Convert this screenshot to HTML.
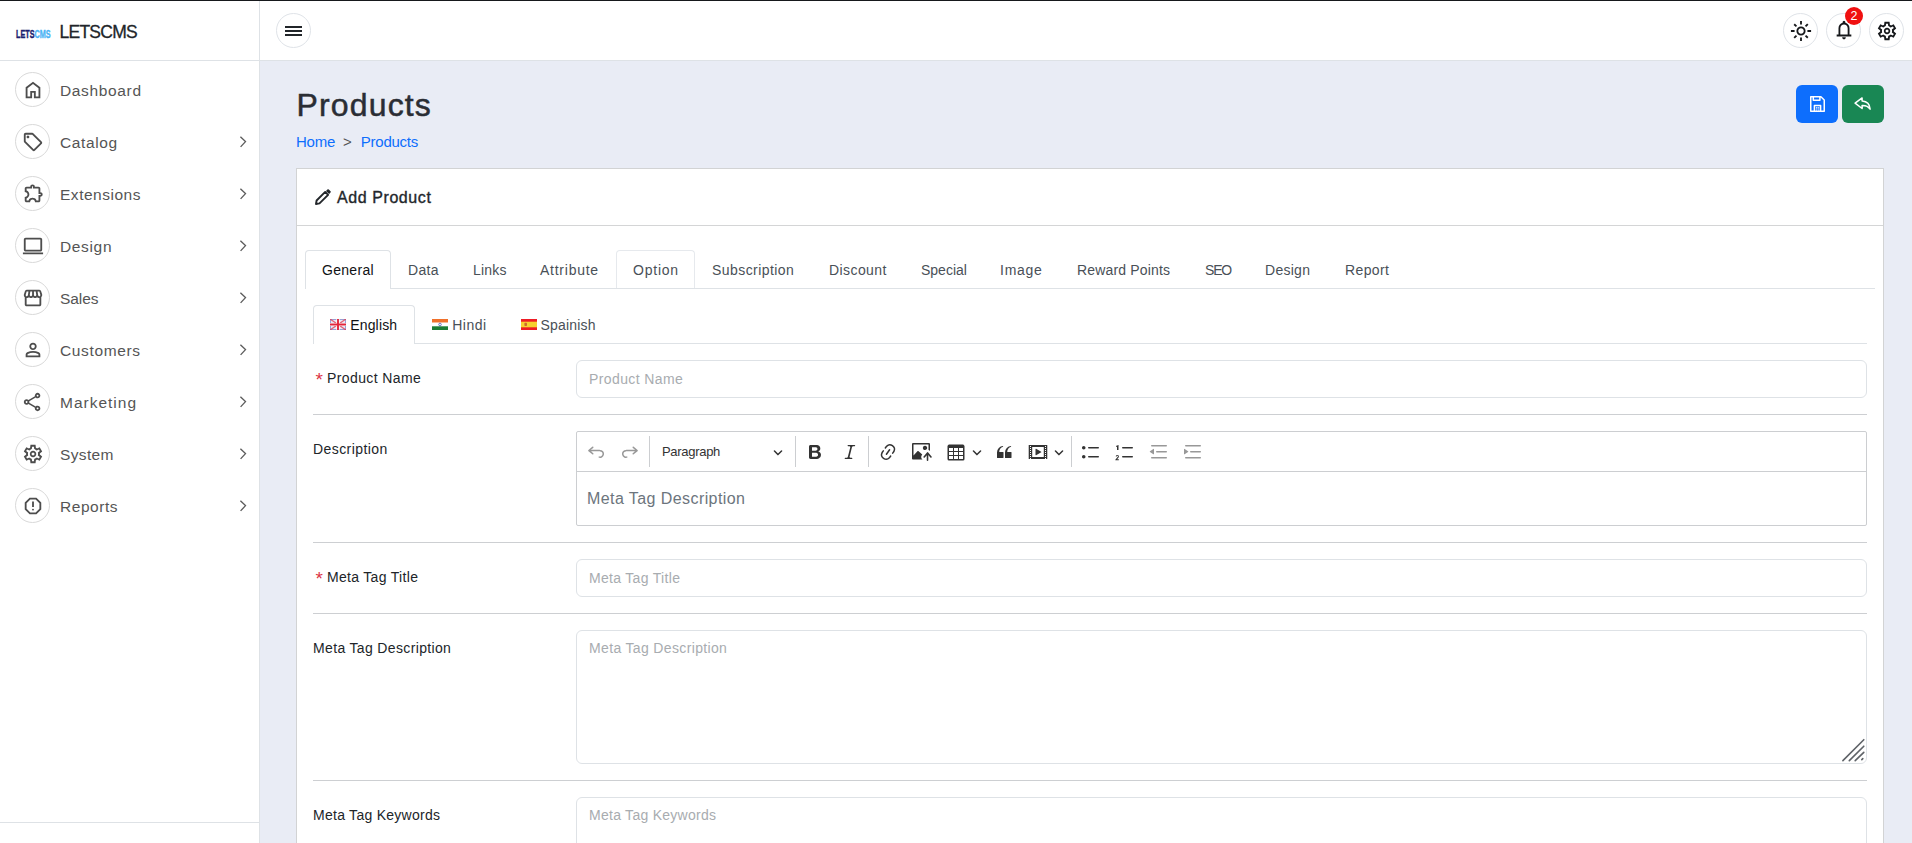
<!DOCTYPE html>
<html lang="en">
<head>
<meta charset="utf-8">
<title>Products</title>
<style>
*{box-sizing:border-box;margin:0;padding:0}
html,body{width:1912px;height:843px;overflow:hidden}
body{position:relative;background:#e9ecf5;font-family:"Liberation Sans",sans-serif;font-size:14px;color:#212529;-webkit-font-smoothing:antialiased}
.abs{position:absolute}
svg{display:block}
#topline{position:absolute;left:0;top:0;width:1912px;height:1px;background:#16181b;z-index:20}
/* sidebar */
#sidebar{position:absolute;left:0;top:0;width:260px;height:823px;background:#fff;border-right:1px solid #dee2e6;border-bottom:1px solid #dee2e6}
#sidebar-rest{position:absolute;left:0;top:823px;width:260px;height:20px;background:#fff;border-right:1px solid #dee2e6}
#brand{position:absolute;left:0;top:1px;width:259px;height:60px;border-bottom:1px solid #dee2e6}
#logo{position:absolute;left:16px;top:26.5px;font-weight:bold;font-size:10.5px;line-height:12px;white-space:nowrap;transform:scaleX(.69);transform-origin:0 50%;letter-spacing:0;-webkit-text-stroke:.4px}
#logo .a{color:#1b1f6e}
#logo .b{color:#4db4f5}
#brandname{position:absolute;left:59.5px;top:20px;font-size:17.5px;line-height:22px;color:#212529;letter-spacing:-.75px;white-space:nowrap;-webkit-text-stroke:.3px #212529}
.mi{position:absolute;left:0;width:259px;height:52px}
.mi .circ{position:absolute;left:15px;top:8px;width:35px;height:35px;border-radius:50%;border:1px solid #d9d9d9;background:#fff}
.mi .circ svg{position:absolute;left:5.5px;top:5.5px;width:22px;height:22px;fill:#4d4d4d}
.mi .lbl{position:absolute;left:60px;top:17px;font-size:15.5px;line-height:20px;color:#555;white-space:nowrap}
.mi .chev{position:absolute;left:238px;top:19px;width:10px;height:14px}
.mi .chev path{fill:none;stroke:#5c5c5c;stroke-width:1.35;stroke-linecap:butt;stroke-linejoin:miter}
/* topbar */
#topbar{position:absolute;left:260px;top:0;width:1652px;height:61px;background:#fff;border-bottom:1px solid #dee2e6}
.tcirc{position:absolute;top:13px;width:35px;height:35px;border-radius:50%;border:1px solid #dfe3e8;background:#fff}
.tcirc svg path,.mi .circ svg path{fill-rule:evenodd}
.tcirc svg{position:absolute;left:5.5px;top:6px;width:22px;height:22px;fill:#16181b}
#badge{position:absolute;left:1845px;top:7px;width:18px;height:18px;border-radius:50%;background:#f01010;color:#fff;font-size:12.5px;line-height:18px;text-align:center;z-index:5}
/* heading */
#ptitle{position:absolute;left:296.5px;top:86px;font-size:32px;line-height:38px;font-weight:400;color:#2a2d34;letter-spacing:1.15px;white-space:nowrap;-webkit-text-stroke:.5px #2a2d34}
#crumb{position:absolute;left:296px;top:132px;font-size:15px;line-height:20px;white-space:nowrap;color:#555}
#crumb a{color:#0d6efd;text-decoration:none}
.btn{position:absolute;top:85px;width:42px;height:38px;border-radius:6px}
#bsave{left:1796px;background:#0d6efd}
#bback{left:1842px;background:#198754}
/* card */
#card{position:absolute;left:296px;top:168px;width:1588px;height:700px;background:#fff;border:1px solid #d2d3d4;border-bottom:0}
#cardhead{position:absolute;left:0;top:0;width:1586px;height:57px;border-bottom:1px solid #d4d5d6}
#cardtitle{position:absolute;left:40px;top:18.5px;font-size:16px;line-height:20px;font-weight:normal;color:#23272b;letter-spacing:.58px;white-space:nowrap;-webkit-text-stroke:.35px #23272b}

/* tabs */
.navline{position:absolute;height:1px;background:#dee2e6}
.tab{position:absolute;height:38px;border:1px solid transparent;border-bottom:0;border-radius:4px 4px 0 0;text-align:left;padding-left:16px;font-size:14px;line-height:21px;padding-top:9px;color:#495057;white-space:nowrap}
.tab.act{background:#fff;border-color:#dee2e6;color:#101214;height:39px}
.tab.hov{border-color:#e6e9ed}
.ltab{position:absolute;height:38px;border:1px solid transparent;border-bottom:0;border-radius:4px 4px 0 0;font-size:14px;line-height:21px;padding:9px 0 0 36.2px;color:#495057;white-space:nowrap}
.ltab.act{background:#fff;border-color:#dee2e6;color:#101214;height:39px}
.flag{position:absolute;left:16px;top:13px;width:16px;height:11px}
/* form */
.sep{position:absolute;left:16px;width:1554px;height:1px;background:#cdcfd2}
.flabel{position:absolute;font-size:14px;line-height:21px;color:#212529;white-space:nowrap}
.flabel .req{color:#dc3545;position:absolute;left:-11.5px;top:1px;font-size:19px;letter-spacing:0}
.finput{position:absolute;left:279px;width:1291px;border:1px solid #dee2e6;border-radius:6px;background:#fff;font-family:"Liberation Sans",sans-serif;font-size:14px;line-height:21px;color:#212529;padding:8px 12px;outline:none;resize:none;overflow:hidden;display:block}
.finput::placeholder{color:#a8acb0;opacity:1}
/* editor */
#editor{position:absolute;left:279px;top:262px;width:1291px;height:95px;border:1px solid #ccced1;border-radius:2px;background:#fff}
#etool{position:absolute;left:0;top:0;width:1289px;height:40px;border-bottom:1px solid #ccced1}
#etool svg{position:absolute;fill:#333}
#etool svg.dis{fill:#333;opacity:.5}
#etool .tsep{position:absolute;top:4px;width:1px;height:31px;background:#ccced1}
#etool .para{position:absolute;left:85px;top:10.5px;font-size:13px;line-height:17px;color:#333;white-space:nowrap;letter-spacing:-.3px}
#econtent{position:absolute;left:10px;top:55px;font-size:16px;line-height:24px;color:#6c757d;white-space:nowrap;letter-spacing:.42px}
</style>
</head>
<body>
<div id="topline"></div>

<div id="sidebar">
  <div id="brand">
    <div id="logo"><span class="a">LETS</span><span class="b">CMS</span></div>
    <div id="brandname">LETSCMS</div>
  </div>
  <div class="mi" style="top:64px"><div class="circ"><svg viewBox="0 -960 960 960"><path d="M240-200h120v-240h240v240h120v-360L480-740 240-560v360Zm-80 80v-480l320-240 320 240v480H520v-240h-80v240H160Z"/></svg></div><div class="lbl" style="letter-spacing:0.65px">Dashboard</div></div>
  <div class="mi" style="top:116px"><div class="circ"><svg viewBox="0 -960 960 960"><path d="M856-390 570-104q-12 12-27 18t-30 6q-15 0-30-6t-27-18L103-457q-11-11-17-25.500T80-513v-287q0-33 23.500-56.500T160-880h287q16 0 31 6.500t26 17.500l352 353q12 12 17.500 27t5.500 30q0 15-5.500 29.500T856-390ZM513-160l286-286-353-354H160v286l353 354ZM260-640q25 0 42.500-17.500T320-700q0-25-17.500-42.500T260-760q-25 0-42.500 17.500T200-700q0 25 17.500 42.500T260-640Z"/></svg></div><div class="lbl" style="letter-spacing:0.6px">Catalog</div><svg class="chev" viewBox="0 0 10 14"><path d="M2.400 1.700 7.500 6.600 2.600 11.900"/></svg></div>
  <div class="mi" style="top:168px"><div class="circ"><svg viewBox="0 -960 960 960"><path d="M352-120H200q-33 0-56.500-23.500T120-200v-152q48 0 84-30.500t36-77.500q0-47-36-77.500T120-568v-152q0-33 23.500-56.500T200-800h160q0-42 29-71t71-29q42 0 71 29t29 71h160q33 0 56.500 23.500T800-720v160q42 0 71 29t29 71q0 42-29 71t-71 29v160q0 33-23.500 56.500T720-120H568q0-50-31.500-85T460-240q-45 0-76.500 35T352-120Zm-152-80h85q24-66 77-93t98-27q45 0 98 27t77 93h85v-240h80q8 0 14-6t6-14q0-8-6-14t-14-6h-80v-240H480v-80q0-8-6-14t-14-6q-8 0-14 6t-6 14v80H200v88q54 20 87 67t33 105q0 57-33 104t-87 68v88Z"/></svg></div><div class="lbl" style="letter-spacing:0.52px">Extensions</div><svg class="chev" viewBox="0 0 10 14"><path d="M2.400 1.700 7.500 6.600 2.600 11.900"/></svg></div>
  <div class="mi" style="top:220px"><div class="circ"><svg viewBox="0 -960 960 960"><path d="M40-120v-80h880v80H40Zm120-120q-33 0-56.500-23.500T80-320v-440q0-33 23.500-56.500T160-840h640q33 0 56.500 23.500T880-760v440q0 33-23.500 56.500T800-240H160Zm0-80h640v-440H160v440Z"/></svg></div><div class="lbl" style="letter-spacing:0.65px">Design</div><svg class="chev" viewBox="0 0 10 14"><path d="M2.400 1.700 7.500 6.600 2.600 11.900"/></svg></div>
  <div class="mi" style="top:272px"><div class="circ"><svg viewBox="0 -960 960 960"><path d="M841-518v318q0 33-23.500 56.500T761-120H201q-33 0-56.500-23.500T121-200v-318q-23-21-35.500-54t-.5-72l42-136q8-26 28.500-43t47.500-17h556q27 0 47 16.500t29 43.500l42 136q12 39-.5 71T841-518Zm-272-42q27 0 41-18.500t11-41.500l-22-140h-78v148q0 21 14 36.500t34 15.500Zm-180 0q23 0 37.500-15.500T441-612v-148h-78l-22 140q-4 24 10.500 42t37.500 18Zm-178 0q18 0 31.500-13t16.500-33l22-154h-78l-40 134q-6 20 6.500 43t41.500 23Zm540 0q29 0 42-23t6-43l-42-134h-76l22 154q3 20 16.500 33t31.500 13ZM201-200h560v-282q-5 2-6.500 2H751q-27 0-47.500-9T663-518q-18 18-41 28t-49 10q-27 0-50.500-10T481-518q-17 18-39.500 28T393-480q-29 0-52.500-10T299-518q-21 21-41.500 29.500T211-480h-4.500q-2.500 0-5.500-2v282Z"/></svg></div><div class="lbl" style="letter-spacing:-0.05px">Sales</div><svg class="chev" viewBox="0 0 10 14"><path d="M2.400 1.700 7.500 6.600 2.600 11.900"/></svg></div>
  <div class="mi" style="top:324px"><div class="circ"><svg viewBox="0 -960 960 960"><path d="M480-480q-66 0-113-47t-47-113q0-66 47-113t113-47q66 0 113 47t47 113q0 66-47 113t-113 47ZM160-160v-112q0-34 17.500-62.500T224-378q62-31 126-46.500T480-440q66 0 130 15.500T736-378q29 15 46.500 43.500T800-272v112H160Zm80-80h480v-32q0-11-5.500-20T700-306q-54-27-109-40.500T480-360q-56 0-111 13.500T260-306q-9 5-14.500 14t-5.500 20v32Zm240-320q33 0 56.500-23.500T560-640q0-33-23.500-56.500T480-720q-33 0-56.500 23.500T400-640q0 33 23.500 56.500T480-560Z"/></svg></div><div class="lbl" style="letter-spacing:0.63px">Customers</div><svg class="chev" viewBox="0 0 10 14"><path d="M2.400 1.700 7.500 6.600 2.600 11.900"/></svg></div>
  <div class="mi" style="top:376px"><div class="circ"><svg viewBox="0 -960 960 960"><path d="M680-80q-50 0-85-35t-35-85q0-6 3-28L282-392q-16 15-37 23.500t-45 8.500q-50 0-85-35t-35-85q0-50 35-85t85-35q24 0 45 8.500t37 23.500l281-164q-2-7-2.500-13.500T560-760q0-50 35-85t85-35q50 0 85 35t35 85q0 50-35 85t-85 35q-24 0-45-8.500T598-672L317-508q2 7 2.500 13.500t.5 14.500q0 8-.5 14.500T317-452l281 164q16-15 37-23.500t45-8.500q50 0 85 35t35 85q0 50-35 85t-85 35Zm0-80q17 0 28.500-11.500T720-200q0-17-11.500-28.500T680-240q-17 0-28.500 11.500T640-200q0 17 11.500 28.500T680-160ZM200-440q17 0 28.500-11.500T240-480q0-17-11.500-28.500T200-520q-17 0-28.500 11.500T160-480q0 17 11.500 28.500T200-440Zm480-280q17 0 28.500-11.500T720-760q0-17-11.500-28.500T680-800q-17 0-28.500 11.500T640-760q0 17 11.500 28.500T680-720Z"/></svg></div><div class="lbl" style="letter-spacing:1.0px">Marketing</div><svg class="chev" viewBox="0 0 10 14"><path d="M2.400 1.700 7.500 6.600 2.600 11.900"/></svg></div>
  <div class="mi" style="top:428px"><div class="circ"><svg viewBox="0 -960 960 960"><path d="m370-80-16-128q-13-5-24.500-12T307-235l-119 50L78-375l103-78q-1-7-1-13.500v-27q0-6.500 1-13.500L78-585l110-190 119 50q11-8 23-15t24-12l16-128h220l16 128q13 5 24.500 12t22.500 15l119-50 110 190-103 78q1 7 1 13.500v27q0 6.500-2 13.500l103 78-110 190-118-50q-11 8-23 15t-24 12L590-80H370Zm70-80h79l14-106q31-8 57.500-23.500T639-327l99 41 39-68-86-65q5-14 7-29.500t2-31.500q0-16-2-31.500t-7-29.500l86-65-39-68-99 42q-22-23-48.500-38.500T533-694l-13-106h-79l-14 106q-31 8-57.500 23.500T321-633l-99-41-39 68 86 64q-5 15-7 30t-2 32q0 16 2 31t7 30l-86 65 39 68 99-42q22 23 48.500 38.500T427-266l13 106Zm42-180q58 0 99-41t41-99q0-58-41-99t-99-41q-59 0-99.500 41T342-480q0 58 40.500 99t99.500 41ZM482-415q-27 0-46-19t-19-46q0-27 19-46t46-19q27 0 46 19t19 46q0 27-19 46t-46 19Z"/></svg></div><div class="lbl" style="letter-spacing:0.36px">System</div><svg class="chev" viewBox="0 0 10 14"><path d="M2.400 1.700 7.500 6.600 2.600 11.900"/></svg></div>
  <div class="mi" style="top:480px"><div class="circ"><svg viewBox="0 -960 960 960"><path d="M480-280q17 0 28.500-11.500T520-320q0-17-11.500-28.500T480-360q-17 0-28.500 11.500T440-320q0 17 11.500 28.500T480-280Zm-40-160h80v-240h-80v240ZM330-120 120-330v-300l210-210h300l210 210v300L630-120H330Zm34-80h232l164-164v-232L596-760H364L200-596v232l164 164Z"/></svg></div><div class="lbl" style="letter-spacing:0.54px">Reports</div><svg class="chev" viewBox="0 0 10 14"><path d="M2.400 1.700 7.500 6.600 2.600 11.900"/></svg></div>
</div>
<div id="sidebar-rest"></div>

<div id="topbar">
  <div class="tcirc" style="left:16px"><svg style="left:8px;top:12px;width:17px;height:10px" viewBox="0 0 17 10"><path d="M0 0h17v2H0zM0 4.100h17v2H0zM0 8.100h17v1.900H0z" fill="#212529"/></svg></div>
  <div class="tcirc" style="left:1523px"><svg viewBox="0 -960 960 960"><path d="M480-360q50 0 85-35t35-85q0-50-35-85t-85-35q-50 0-85 35t-35 85q0 50 35 85t85 35Zm0 80q-83 0-141.500-58.500T280-480q0-83 58.500-141.500T480-680q83 0 141.500 58.500T680-480q0 83-58.500 141.500T480-280ZM200-440H40v-80h160v80Zm720 0H760v-80h160v80ZM440-760v-160h80v160h-80Zm0 720v-160h80v160h-80ZM256-650l-101-97 57-59 96 100-52 56Zm492 496-97-101 53-55 101 97-57 59Zm-98-550 97-101 59 57-100 96-56-52ZM154-212l101-97 55 53-97 101-59-57Z"/></svg></div>
  <div class="tcirc" style="left:1566px"><svg style="top:5px" viewBox="0 -960 960 960"><path d="M160-200v-80h80v-280q0-83 50-147.500T420-792v-28q0-25 17.500-42.500T480-880q25 0 42.500 17.500T540-820v28q80 20 130 84.500T720-560v280h80v80H160Zm320 120q-33 0-56.500-23.500T400-160h160q0 33-23.500 56.500T480-80ZM320-280h320v-280q0-66-47-113t-113-47q-66 0-113 47t-47 113v280Z"/></svg></div>
  <div class="tcirc" style="left:1609px"><svg viewBox="0 -960 960 960"><path d="m370-80-16-128q-13-5-24.500-12T307-235l-119 50L78-375l103-78q-1-7-1-13.500v-27q0-6.500 1-13.500L78-585l110-190 119 50q11-8 23-15t24-12l16-128h220l16 128q13 5 24.500 12t22.500 15l119-50 110 190-103 78q1 7 1 13.500v27q0 6.500-2 13.500l103 78-110 190-118-50q-11 8-23 15t-24 12L590-80H370Zm70-80h79l14-106q31-8 57.500-23.500T639-327l99 41 39-68-86-65q5-14 7-29.500t2-31.500q0-16-2-31.500t-7-29.500l86-65-39-68-99 42q-22-23-48.500-38.500T533-694l-13-106h-79l-14 106q-31 8-57.500 23.500T321-633l-99-41-39 68 86 64q-5 15-7 30t-2 32q0 16 2 31t7 30l-86 65 39 68 99-42q22 23 48.500 38.500T427-266l13 106Zm42-180q58 0 99-41t41-99q0-58-41-99t-99-41q-59 0-99.500 41T342-480q0 58 40.500 99t99.500 41ZM482-415q-27 0-46-19t-19-46q0-27 19-46t46-19q27 0 46 19t19 46q0 27-19 46t-46 19Z"/></svg></div>
</div>
<div id="badge">2</div>

<h1 id="ptitle">Products</h1>
<div id="crumb"><a style="letter-spacing:-.25px">Home</a><span style="margin:0 9px 0 8px">&gt;</span><a style="letter-spacing:-.24px">Products</a></div>
<div class="btn" id="bsave"><svg class="abs" style="left:14px;top:11px;width:15px;height:16px" viewBox="0 0 15 16"><path d="M.75.75h10.2l3.3 3.3v11.2H.75z M3.3.9v3.3h6.6V.9 M4.4 15.1V9.6h6.2v5.5" fill="none" stroke="#fff" stroke-width="1.5" stroke-linejoin="round"/><path d="M5.900 11h3.400v3.600H5.900z" fill="#fff" opacity=".92"/><path d="M7.600 11v3.600M5.900 12.200h3.400M5.900 13.400h3.400" fill="none" stroke="#0d6efd" stroke-width=".55"/></svg></div>
<div class="btn" id="bback"><svg class="abs" style="left:12px;top:12px;width:18px;height:14px" viewBox="0 0 18 14"><path d="M8.1.9 1.1 6.2l7 5.3V8.4c3.6-.2 6.1.8 8 3.7C15.800 7.600 13.200 4.500 8.100 4.100z" fill="none" stroke="#fff" stroke-width="1.5" stroke-linejoin="round"/></svg></div>

<div id="card">
  <div id="cardhead">
    <svg class="abs" style="left:18px;top:20px;width:16px;height:16px" viewBox="0 0 16 16"><path d="M1 15 1.600 11.500 10.200 2.900 13.100 5.800 4.500 14.400Z" fill="none" stroke="#23272b" stroke-width="1.900" stroke-linejoin="round"/><path d="M11 1.900 12.400.500a1 1 0 0 1 1.400 0L15.500 2.200a1 1 0 0 1 0 1.400L14.100 5Z" fill="#23272b"/></svg>
    <div id="cardtitle">Add Product</div>
  </div>
  <div class="navline" style="left:8px;top:119px;width:1570px"></div>
  <div class="tab act" style="left:8px;top:81px;width:86px;letter-spacing:0.3px">General</div>
  <div class="tab" style="left:94px;top:81px;width:65px;letter-spacing:0.35px">Data</div>
  <div class="tab" style="left:159px;top:81px;width:67px;letter-spacing:0.2px">Links</div>
  <div class="tab" style="left:226px;top:81px;width:93px;letter-spacing:0.75px">Attribute</div>
  <div class="tab hov" style="left:319px;top:81px;width:79px;letter-spacing:0.78px">Option</div>
  <div class="tab" style="left:398px;top:81px;width:117px;letter-spacing:0.43px">Subscription</div>
  <div class="tab" style="left:515px;top:81px;width:92px;letter-spacing:0.42px">Discount</div>
  <div class="tab" style="left:607px;top:81px;width:79px;letter-spacing:0px">Special</div>
  <div class="tab" style="left:686px;top:81px;width:77px;letter-spacing:0.75px">Image</div>
  <div class="tab" style="left:763px;top:81px;width:128px;letter-spacing:0.17px">Reward Points</div>
  <div class="tab" style="left:891px;top:81px;width:60px;letter-spacing:-1.2px">SEO</div>
  <div class="tab" style="left:951px;top:81px;width:80px;letter-spacing:0.27px">Design</div>
  <div class="tab" style="left:1031px;top:81px;width:78px;letter-spacing:0.38px">Report</div>
  <div class="navline" style="left:16px;top:174px;width:1554px"></div>
  <div class="ltab act" style="left:16px;top:136px;width:102px;letter-spacing:0.17px"><svg class="flag" viewBox="0 0 16 11"><rect width="16" height="11" fill="#e8eaf6"/><rect x=".5" y=".5" width="15" height="10" fill="none" stroke="#5a63b8" stroke-width="1" opacity=".55"/><path d="M0 0l16 11M16 0L0 11" stroke="#e2344a" stroke-width="1.3" opacity=".75"/><path d="M8 0v11M0 5.500h16" stroke="#fff" stroke-width="3.200"/><path d="M8 0v11M0 5.500h16" stroke="#e2263c" stroke-width="1.900"/></svg>English</div>
  <div class="ltab" style="left:118px;top:136px;width:89px;letter-spacing:0.5px"><svg class="flag" viewBox="0 0 16 11"><rect width="16" height="3.700" fill="#f0702a"/><rect y="3.700" width="16" height="3.600" fill="#fff"/><rect y="7.300" width="16" height="3.700" fill="#1c7c34"/><circle cx="8" cy="5.500" r="1.300" fill="none" stroke="#3a46a8" stroke-width=".700"/></svg>Hindi</div>
  <div class="ltab" style="left:207px;top:136px;width:109px;letter-spacing:0.18px;padding-left:35.5px"><svg class="flag" viewBox="0 0 16 11"><rect width="16" height="11" fill="#f6d030"/><rect width="16" height="2.700" fill="#ee1c25"/><rect y="8.300" width="16" height="2.700" fill="#ee1c25"/><rect x="3.400" y="3.800" width="2.600" height="3.200" rx=".8" fill="#c4572c" opacity=".85"/></svg>Spainish</div>
  <label class="flabel" style="left:30px;top:199px;letter-spacing:0.39px"><span class="req">*</span>Product Name</label>
  <input class="finput" type="text" placeholder="Product Name" style="letter-spacing:0.39px;top:191px;height:38px">
  <div class="sep" style="top:245px"></div>
  <label class="flabel" style="left:16px;top:270px;letter-spacing:0.43px">Description</label>
  <div id="editor"><div id="etool">
  <svg class="dis" style="left:9px;top:10px;width:20px;height:20px" viewBox="0 0 20 20"><path d="m5.042 9.367 2.189 1.837a.75.75 0 0 1-.965 1.149l-3.788-3.180a.747.747 0 0 1-.21-.284.75.75 0 0 1 .17-.945L6.230 4.762a.75.75 0 1 1 .964 1.150L4.863 7.866h8.917A.75.75 0 0 1 14 7.900a4 4 0 1 1-1.477 7.718l.344-1.489a2.500 2.500 0 1 0 1.094-4.730l.008-.032H5.042z"/></svg>
  <svg class="dis" style="left:43px;top:10px;width:20px;height:20px" viewBox="0 0 20 20"><path d="m14.958 9.367-2.189 1.837a.75.75 0 0 0 .965 1.149l3.788-3.180a.747.747 0 0 0 .21-.284.75.75 0 0 0-.17-.945L13.770 4.762a.75.75 0 1 0-.964 1.150l2.331 1.955H6.220A.75.75 0 0 0 6 7.900a4 4 0 1 0 1.477 7.718l-.344-1.489A2.500 2.500 0 1 1 6.039 9.400l-.008-.032h8.927z"/></svg>
  <svg style="left:228px;top:10px;width:20px;height:20px" viewBox="0 0 20 20"><path d="M10.187 17H5.773c-.637 0-1.092-.138-1.364-.415-.273-.277-.409-.718-.409-1.323V4.738c0-.617.14-1.062.419-1.332.279-.27.73-.406 1.354-.406h4.680c.69 0 1.288.041 1.793.124.506.083.96.242 1.360.478.341.197.644.447.906.750a3.262 3.262 0 0 1 .808 2.162c0 1.401-.722 2.426-2.167 3.075C15.050 10.175 16 11.315 16 13.010a3.756 3.756 0 0 1-2.296 3.504 6.100 6.100 0 0 1-1.517.377c-.571.073-1.238.11-2 .11zm-.217-6.217H7v4.087h3.069c1.977 0 2.965-.69 2.965-2.072 0-.707-.256-1.220-.768-1.537-.512-.319-1.277-.478-2.296-.478zM7 5.130v3.619h2.606c.729 0 1.292-.067 1.690-.2a1.600 1.600 0 0 0 .91-.765c.165-.267.247-.566.247-.897 0-.707-.26-1.176-.778-1.409-.519-.232-1.310-.348-2.375-.348H7z"/></svg>
  <svg style="left:262.5px;top:10px;width:20px;height:20px" viewBox="0 0 20 20"><path d="m9.586 14.633.021.004c-.036.335.095.655.393.962.082.083.173.15.274.201h1.474a.6.6 0 1 1 0 1.200H5.304a.6.6 0 0 1 0-1.200h1.150c.474-.07.809-.182 1.005-.334.157-.122.291-.32.404-.597l2.416-9.550a1.053 1.053 0 0 0-.281-.823 1.120 1.120 0 0 0-.442-.296H8.150a.6.6 0 0 1 0-1.200h6.443a.6.6 0 1 1 0 1.200h-1.195c-.376.056-.65.155-.823.296-.215.175-.423.439-.623.790l-2.366 9.347z"/></svg>
  <svg style="left:301px;top:10px;width:20px;height:20px" viewBox="0 0 20 20"><path d="m11.077 15 .991-1.416a.75.75 0 1 1 1.229.860l-1.148 1.640a.748.748 0 0 1-.217.206 5.251 5.251 0 0 1-8.503-5.955.741.741 0 0 1 .12-.274l1.147-1.639a.75.75 0 1 1 1.228.860L4.933 10.700l.006.003a3.750 3.750 0 0 0 6.132 4.294l.006.004zm5.494-5.335a.748.748 0 0 1-.12.274l-1.147 1.639a.75.75 0 1 1-1.228-.860l.860-1.230a3.750 3.750 0 0 0-6.144-4.301l-.860 1.229a.75.75 0 0 1-1.229-.860l1.148-1.640a.748.748 0 0 1 .217-.206 5.251 5.251 0 0 1 8.503 5.955zm-4.563-2.532a.75.75 0 0 1 .184 1.045l-3.155 4.505a.75.75 0 1 1-1.229-.860l3.155-4.506a.75.75 0 0 1 1.045-.184z"/></svg>
  <svg style="left:335px;top:10px;width:20px;height:20px" viewBox="0 0 20 20"><path d="M1.201 1C.538 1 0 1.470 0 2.100v14.363c0 .64.534 1.037 1.186 1.037h9.494a2.970 2.970 0 0 1-.414-.287 2.998 2.998 0 0 1-1.055-2.030 3.003 3.003 0 0 1 .693-2.185l.383-.455-.02.018-3.650-3.410a.695.695 0 0 0-.957-.034L1.500 13.600V2.500h15v5.535a2.970 2.970 0 0 1 1.412.932l.088.105V2.100c0-.63-.547-1.100-1.200-1.100H1.202Zm11.713 2.803a2.146 2.146 0 0 0-2.049 1.992 2.140 2.140 0 0 0 1.280 2.096 2.130 2.130 0 0 0 2.644-3.110 2.134 2.134 0 0 0-1.875-.978ZM15.522 19.100a.79.79 0 0 0 .79-.79v-5.373l2.059 2.455a.79.79 0 1 0 1.211-1.015l-3.352-3.995a.79.79 0 0 0-.995-.179.784.784 0 0 0-.299.221l-3.350 3.990a.79.79 0 1 0 1.210 1.017l1.936-2.306v5.185c0 .436.353.79.79.79Z"/></svg>
  <svg style="left:368.5px;top:10px;width:20px;height:20px" viewBox="0 0 20 20"><path d="M3 6v3h4V6H3zm0 4v3h4v-3H3zm0 4v3h4v-3H3zm5 3h4v-3H8v3zm5 0h4v-3h-4v3zm4-4v-3h-4v3h4zm0-4V6h-4v3h4zm1.500 8a1.500 1.500 0 0 1-1.500 1.500H3A1.500 1.500 0 0 1 1.500 17V4c.222-.863 1.068-1.500 2-1.500h13c.932 0 1.778.637 2 1.500v13zM12 13v-3H8v3h4zm0-4V6H8v3h4z"/></svg>
  <svg style="left:416.5px;top:10px;width:20px;height:20px" viewBox="0 0 20 20"><path d="M3 10.423a6.500 6.500 0 0 1 6.056-6.408l.038.670C6.448 5.423 5.354 7.663 5.220 10H9c.552 0 .5.432.5.986v4.511c0 .554-.448.503-1 .503h-5c-.552 0-.5-.449-.5-1.003v-4.574zm8 0a6.500 6.500 0 0 1 6.056-6.408l.038.670c-2.646.739-3.740 2.979-3.873 5.315H17c.552 0 .5.432.5.986v4.511c0 .554-.448.503-1 .503h-5c-.552 0-.5-.449-.5-1.003v-4.574z"/></svg>
  <svg style="left:451.20000000000005px;top:10px;width:20px;height:20px" viewBox="0 0 20 20"><path d="M18.680 3.030c.6 0 .59-.03.59.550v12.840c0 .59.010.56-.59.560H1.290c-.6 0-.59.030-.59-.560V3.580c0-.58-.010-.55.6-.55h17.380zM15.770 15V5H4.200v10h11.570zM2 4v1h1V4H2zm0 2v1h1V6H2zm0 2v1h1V8H2zm0 2v1h1v-1H2zm0 2v1h1v-1H2zm0 2v1h1v-1H2zm0 2v1h1v-1H2zM17 4v1h1V4h-1zm0 2v1h1V6h-1zm0 2v1h1V8h-1zm0 2v1h1v-1h-1zm0 2v1h1v-1h-1zm0 2v1h1v-1h-1zm0 2v1h1v-1h-1zM7.500 7.177a.4.4 0 0 1 .593-.351l5.133 2.824a.4.4 0 0 1 0 .7l-5.133 2.824a.4.4 0 0 1-.593-.350V7.176v.001z"/></svg>
  <svg style="left:504px;top:10px;width:20px;height:20px" viewBox="0 0 20 20"><path d="M7 5.750c0 .414.336.750.750.750h9.500a.750.750 0 1 0 0-1.500h-9.500a.750.750 0 0 0-.750.750zm-6 0C1 4.784 1.777 4 2.750 4c.966 0 1.750.777 1.750 1.750 0 .966-.777 1.750-1.750 1.750C1.784 7.500 1 6.723 1 5.750zm6 9c0 .414.336.750.750.750h9.500a.750.750 0 1 0 0-1.500h-9.500a.750.750 0 0 0-.750.750zm-6 0c0-.966.777-1.750 1.750-1.750.966 0 1.750.777 1.750 1.750 0 .966-.777 1.750-1.750 1.750C1.784 16.500 1 15.723 1 14.750z"/></svg>
  <svg style="left:538px;top:10px;width:20px;height:20px" viewBox="0 0 20 20"><path d="M7 5.750c0 .414.336.750.750.750h9.500a.750.750 0 1 0 0-1.500h-9.500a.750.750 0 0 0-.750.750zM3.500 3v5H2V4.700H1v-1h1.500V3h1zM.343 17.857l2.590-3.257H2.920a.6.6 0 1 0-1.040 0H.719a1.600 1.600 0 1 1 3.047.685l-1.627 2.082h1.694v.930H.343v-.440zM7 14.750c0 .414.336.750.750.750h9.500a.750.750 0 1 0 0-1.500h-9.500a.750.750 0 0 0-.750.750z"/></svg>
  <svg class="dis" style="left:572px;top:10px;width:20px;height:20px" viewBox="0 0 20 20"><path d="M2 3.750c0 .414.336.750.750.750h14.500a.750.750 0 1 0 0-1.500H2.750a.750.750 0 0 0-.750.750zm5 6c0 .414.336.750.750.750h9.500a.750.750 0 1 0 0-1.500h-9.500a.750.750 0 0 0-.750.750zM2.750 16.500h14.500a.750.750 0 1 0 0-1.500H2.750a.750.750 0 1 0 0 1.500zm1.618-9.550L.980 9.358a.4.4 0 0 0 .013.661l3.390 2.207A.4.4 0 0 0 5 11.892V7.275a.4.4 0 0 0-.632-.326z"/></svg>
  <svg class="dis" style="left:606px;top:10px;width:20px;height:20px" viewBox="0 0 20 20"><path d="M2 3.750c0 .414.336.750.750.750h14.500a.750.750 0 1 0 0-1.500H2.750a.750.750 0 0 0-.750.750zm5 6c0 .414.336.750.750.750h9.500a.750.750 0 1 0 0-1.500h-9.500a.750.750 0 0 0-.750.750zM2.750 16.500h14.500a.750.750 0 1 0 0-1.500H2.750a.750.750 0 1 0 0 1.500zM1.632 6.950 5.020 9.358a.4.4 0 0 1-.013.661l-3.390 2.207A.4.4 0 0 1 1 11.892V7.275a.4.4 0 0 1 .632-.326z"/></svg>
  <svg style="left:196px;top:15px;width:10px;height:10px" viewBox="0 0 10 10"><path d="M.941 4.523a.75.75 0 1 1 1.060-1.060l3.006 3.005 3.005-3.005a.75.75 0 1 1 1.060 1.060l-3.549 3.550a.75.75 0 0 1-1.168-.136L.941 4.523z"/></svg>
  <svg style="left:395.3px;top:15px;width:10px;height:10px" viewBox="0 0 10 10"><path d="M.941 4.523a.75.75 0 1 1 1.060-1.060l3.006 3.005 3.005-3.005a.75.75 0 1 1 1.060 1.060l-3.549 3.550a.75.75 0 0 1-1.168-.136L.941 4.523z"/></svg>
  <svg style="left:477.2px;top:15px;width:10px;height:10px" viewBox="0 0 10 10"><path d="M.941 4.523a.75.75 0 1 1 1.060-1.060l3.006 3.005 3.005-3.005a.75.75 0 1 1 1.060 1.060l-3.549 3.550a.75.75 0 0 1-1.168-.136L.941 4.523z"/></svg>
  <div class="tsep" style="left:72px"></div>
  <div class="tsep" style="left:218px"></div>
  <div class="tsep" style="left:291px"></div>
  <div class="tsep" style="left:494px"></div>
  <div class="para">Paragraph</div>
  </div><div id="econtent">Meta Tag Description</div></div>
  <div class="sep" style="top:373px"></div>
  <label class="flabel" style="left:30px;top:398px;letter-spacing:0.31px"><span class="req">*</span>Meta Tag Title</label>
  <input class="finput" type="text" placeholder="Meta Tag Title" style="letter-spacing:0.31px;top:390px;height:38px">
  <div class="sep" style="top:444px"></div>
  <label class="flabel" style="left:16px;top:469px;letter-spacing:0.35px">Meta Tag Description</label>
  <textarea class="finput" placeholder="Meta Tag Description" style="padding-top:7px;letter-spacing:0.35px;top:461px;height:134px"></textarea>
  <svg class="abs" style="left:1544px;top:568px;width:25px;height:25px" viewBox="1841 737 25 25"><path d="M1842.900 760.600 1863.800 739.700M1849.300 760.600 1863.800 746.200M1855.200 760.600 1863.800 752.300M1861.800 759.600 1862.800 758.600" fill="none" stroke="#5f6368" stroke-width="1.600" stroke-linecap="round"/></svg>
  <div class="sep" style="top:611px"></div>
  <label class="flabel" style="left:16px;top:636px;letter-spacing:0.27px">Meta Tag Keywords</label>
  <textarea class="finput" placeholder="Meta Tag Keywords" style="padding-top:7px;letter-spacing:0.27px;top:628px;height:134px"></textarea>
</div>
</body>
</html>
